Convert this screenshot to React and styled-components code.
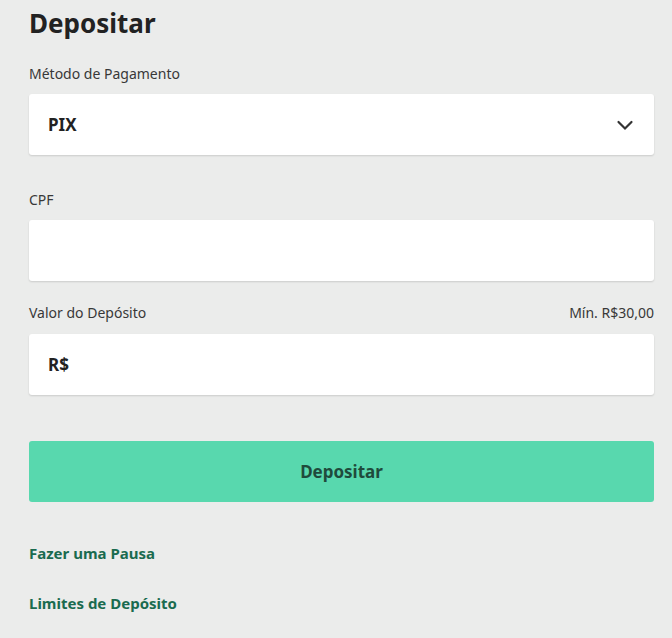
import React from "react";
import styled, { createGlobalStyle } from "styled-components";

const Global = createGlobalStyle`
  html, body { margin: 0; padding: 0; background: #ebeceb; }
  body { font-family: "Noto Sans", "Open Sans", sans-serif; color: #2b2b2b; }
  * { box-sizing: border-box; }
`;

const Page = styled.div`
  padding: 4px 18px 0 29px;
  min-height: 638px;
  background: #ebeceb;
`;

const Title = styled.h1`
  margin: 0;
  font-size: 26px;
  line-height: 38px;
  font-weight: 700;
  color: #222;
`;

const Field = styled.div`
  margin-top: ${(p) => p.$mt}px;
`;

const LabelRow = styled.div`
  display: flex;
  justify-content: space-between;
  align-items: center;
  height: 20px;
  font-size: 14px;
  color: #383838;
  margin-bottom: ${(p) => p.$mb}px;
`;

const Box = styled.div`
  height: 61px;
  background: #fff;
  border-radius: 3px;
  box-shadow: 0 1px 2px rgba(0, 0, 0, 0.14);
  display: flex;
  align-items: center;
  justify-content: space-between;
  padding: 0 20px 0 19px;
  font-size: 17px;
  font-weight: 700;
  color: #222;
`;

const Button = styled.button`
  display: block;
  width: 100%;
  height: 61px;
  margin-top: 46px;
  border: none;
  border-radius: 3px;
  background: #58d8ae;
  color: #1f4b3c;
  font-family: inherit;
  font-size: 17px;
  font-weight: 700;
`;

const LinkText = styled.a`
  display: block;
  font-size: 15px;
  font-weight: 700;
  color: #1a6b4f;
  line-height: 20px;
  margin-top: ${(p) => p.$mt}px;
  text-decoration: none;
`;

const Chevron = () => (
  <svg width="18" height="18" viewBox="0 0 18 18" fill="none">
    <path d="M2.5 6l6.5 6.5L15.5 6" stroke="#333" strokeWidth="2.2" strokeLinecap="round" />
  </svg>
);

export default function App() {
  return (
    <>
      <Global />
      <Page>
        <Title>Depositar</Title>
        <Field $mt={21}>
          <LabelRow $mb={11}>Método de Pagamento</LabelRow>
          <Box>
            <span>PIX</span>
            <Chevron />
          </Box>
        </Field>
        <Field $mt={34}>
          <LabelRow $mb={11}>CPF</LabelRow>
          <Box />
        </Field>
        <Field $mt={21}>
          <LabelRow $mb={12}>
            <span>Valor do Depósito</span>
            <span>Mín. R$30,00</span>
          </LabelRow>
          <Box>
            <span>R$</span>
          </Box>
        </Field>
        <Button>Depositar</Button>
        <LinkText href="#" $mt={41}>Fazer uma Pausa</LinkText>
        <LinkText href="#" $mt={30}>Limites de Depósito</LinkText>
      </Page>
    </>
  );
}
